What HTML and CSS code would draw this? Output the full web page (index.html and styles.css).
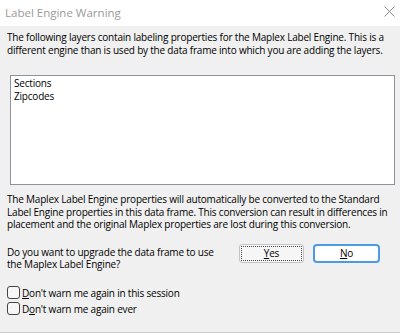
FILE: index.html
```html
<!DOCTYPE html>
<html>
<head>
<meta charset="utf-8">
<link rel="stylesheet" href="styles.css">
</head>
<body>
<div class="dialog">
  <div class="titlebar">
    <span class="title">Label Engine Warning</span>
    <svg class="close" width="11" height="11" viewBox="0 0 11 11"><path d="M0.5 0.5 L10.5 10.5 M10.5 0.5 L0.5 10.5" stroke="#8a8a8a" stroke-width="1" fill="none"/></svg>
  </div>
  <div class="body">
    <p class="para p1">The following layers contain labeling properties for the Maplex Label Engine. This is a<br>different engine than is used by the data frame into which you are adding the layers.</p>
    <div class="listbox">
      <div class="item">Sections</div>
      <div class="item">Zipcodes</div>
    </div>
    <p class="para p2">The Maplex Label Engine properties will automatically be converted to the Standard<br>Label Engine properties in this data frame. This conversion can result in differences in<br>placement and the original Maplex properties are lost during this conversion.</p>
    <div class="question-row">
      <p class="para question">Do you want to upgrade the data frame to use<br>the Maplex Label Engine?</p>
      <div class="buttons">
        <button class="btn btn-yes"><span class="focus"><u>Y</u>es</span></button>
        <button class="btn btn-no"><u>N</u>o</button>
      </div>
    </div>
    <div class="checks">
      <label class="check"><span class="box"></span><span><u>D</u>on't warn me again in this session</span></label>
      <label class="check"><span class="box"></span><span>D<u>o</u>n't warn me again ever</span></label>
    </div>
  </div>
</div>
</body>
</html>
```
FILE: styles.css
```css
html, body {
  margin: 0;
  padding: 0;
  background: #ffffff;
}
.dialog {
  width: 400px;
  height: 333px;
  display: flex;
  flex-direction: column;
  font-family: "Open Sans", "Noto Sans", sans-serif;
  font-size: 10px;
  letter-spacing: -0.2px;
  color: #000;
}
.titlebar {
  flex: 0 0 26px;
  background: #fff;
  display: flex;
  align-items: center;
  justify-content: space-between;
  padding: 0 5px 0 5px;
}
.title {
  font-size: 11.5px;
  letter-spacing: 0;
  color: #9a9a9a;
  margin-top: -2px;
}
.close {
  margin-top: -3px;
}
.body {
  flex: 1 1 auto;
  min-height: 0;
  background: #f0f0f0;
  border-bottom: 1px solid #cfcfcf;
  padding: 5px 10px 0 7px;
  display: flex;
  flex-direction: column;
}
.para {
  margin: 0;
  line-height: 12.5px;
  white-space: nowrap;
}
.listbox {
  margin: 19px 0 0 3px;
  width: 377px;
  height: 106px;
  flex: 0 0 auto;
  background: #fff;
  border: 1px solid #8e929b;
  padding: 1px 3px;
}
.item {
  line-height: 12.5px;
}
.p2 {
  margin-top: 8px;
}
.question-row {
  display: flex;
  align-items: flex-start;
  margin-top: 15px;
}
.question {
  width: 225px;
}
.buttons {
  display: flex;
  gap: 9px;
  margin-left: 7px;
  margin-top: -2px;
}
.btn {
  font: inherit;
  letter-spacing: inherit;
  width: 65px;
  height: 19px;
  background: #f6f6f6;
  border: 1px solid #c4c4c4;
  border-radius: 3px;
  padding: 1px;
  color: #000;
  display: flex;
  align-items: center;
  justify-content: center;
}
.focus {
  flex: 1;
  align-self: stretch;
  display: flex;
  align-items: center;
  justify-content: center;
  border: 1px dotted #444;
}
.btn-no {
  width: 67px;
  background: #fff;
  border: 2px solid #4a9be0;
  border-radius: 4px;
}
.checks {
  margin-top: 15px;
  display: flex;
  flex-direction: column;
  gap: 2px;
}
.check {
  display: flex;
  align-items: center;
  height: 14px;
  gap: 2px;
}
.box {
  width: 11px;
  height: 11px;
  border: 1px solid #444;
  border-radius: 3px;
  background: #f6f6f6;
}
```
